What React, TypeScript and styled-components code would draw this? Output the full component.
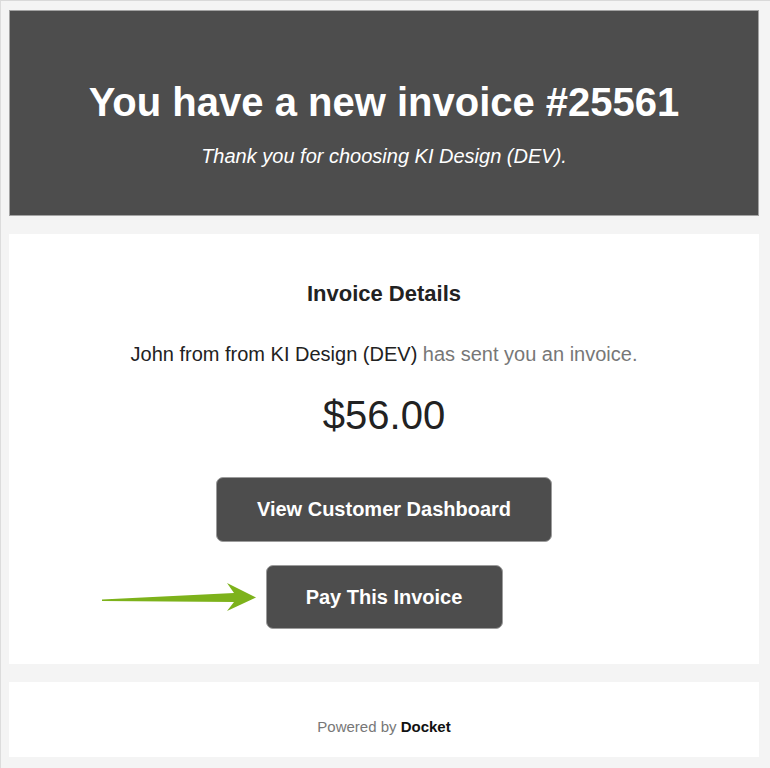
import { createGlobalStyle, styled } from "styled-components";

const GlobalStyle = createGlobalStyle`
  * {
    box-sizing: border-box;
  }

  body {
    margin: 0;
    background: #f4f4f4;
    font-family: "Liberation Sans", Arial, sans-serif;
  }
`;

const Page = styled.div`
  width: 770px;
  min-height: 768px;
  background: #f4f4f4;
  border-top: 1px solid #d9d9d9;
  border-left: 1px solid #dcdcdc;
  padding: 9px 11px 12px 8px;
  display: flex;
  flex-direction: column;
  gap: 18px;
`;

const Header = styled.header`
  background: #4d4d4d;
  border: 1px solid #a3a3a3;
  padding: 67px 20px 47px;
  display: flex;
  flex-direction: column;
  align-items: center;
  gap: 18px;
  color: #fff;
`;

const Title = styled.h1`
  margin: 0;
  font-size: 40px;
  line-height: 48px;
  font-weight: 700;
`;

const Subtitle = styled.p`
  margin: 0;
  font-size: 20px;
  line-height: 24px;
  font-style: italic;
`;

const Card = styled.section`
  background: #fff;
  padding: 47px 20px 35px;
  display: flex;
  flex-direction: column;
  align-items: center;
  color: #222;
`;

const Heading = styled.h2`
  margin: 0;
  font-size: 22px;
  line-height: 26px;
  font-weight: 700;
`;

const Message = styled.p`
  margin: 35px 0 0;
  font-size: 20px;
  line-height: 24px;

  span {
    color: #777;
  }
`;

const Amount = styled.div`
  margin-top: 25px;
  font-size: 40px;
  line-height: 48px;
`;

const Actions = styled.div`
  margin-top: 38px;
  display: flex;
  flex-direction: column;
  align-items: center;
  gap: 23px;
`;

const ButtonWrap = styled.div`
  position: relative;
`;

const ActionButton = styled.button<{ $wide?: boolean }>`
  height: ${(p) => (p.$wide ? "65px" : "64px")};
  width: ${(p) => (p.$wide ? "336px" : "237px")};
  background: #4d4d4d;
  color: #fff;
  border: 1px solid #9c9c9c;
  border-radius: 7px;
  font-family: "Liberation Sans", Arial, sans-serif;
  font-size: 20px;
  font-weight: 700;
  cursor: pointer;
`;

const Arrow = styled.svg`
  position: absolute;
  right: calc(100% + 9px);
  top: 17px;
  width: 156px;
  height: 30px;
`;

const Footer = styled.footer`
  background: #fff;
  padding: 36px 20px 21px;
  text-align: center;
  font-size: 15px;
  line-height: 18px;
  color: #777;

  b {
    color: #111;
  }
`;

export default function App() {
  return (
    <>
      <GlobalStyle />
      <Page>
        <Header>
          <Title>You have a new invoice #25561</Title>
          <Subtitle>Thank you for choosing KI Design (DEV).</Subtitle>
        </Header>
        <Card>
          <Heading>Invoice Details</Heading>
          <Message>
            John from from KI Design (DEV) <span>has sent you an invoice.</span>
          </Message>
          <Amount>$56.00</Amount>
          <Actions>
            <ActionButton $wide>View Customer Dashboard</ActionButton>
            <ButtonWrap>
              <Arrow viewBox="0 0 156 30">
                <polygon
                  points="1,17.5 133,11 126,1 155,15.5 126,29 133,20 1,19"
                  fill="#7db21b"
                />
              </Arrow>
              <ActionButton>Pay This Invoice</ActionButton>
            </ButtonWrap>
          </Actions>
        </Card>
        <Footer>
          Powered by <b>Docket</b>
        </Footer>
      </Page>
    </>
  );
}
